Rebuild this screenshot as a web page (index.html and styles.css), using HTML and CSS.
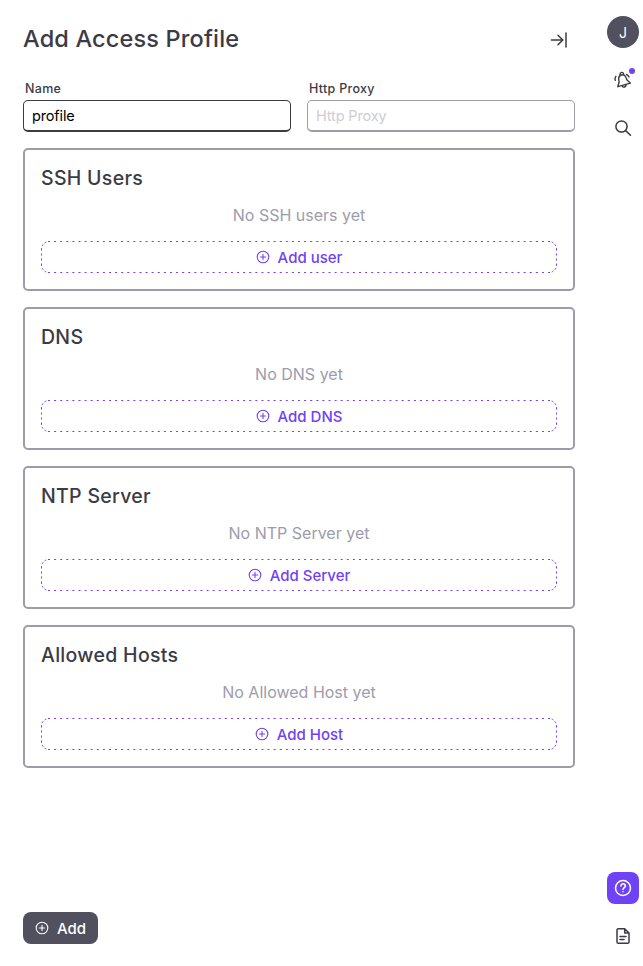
FILE: index.html
```html
<!DOCTYPE html>
<html lang="en">
<head>
<meta charset="utf-8">
<title>Add Access Profile</title>
<link rel="stylesheet" href="styles.css">
</head>
<body>
<svg class="defs" aria-hidden="true">
  <symbol id="plus" viewBox="0 0 14 14"><circle cx="7" cy="7" r="5.8"/><path d="M7 4.4v5.2M4.400 7h5.200"/></symbol>
  <symbol id="outline" viewBox="0 0 516 32">
    <path stroke-dasharray="2 4.098" d="M7 .5h502"/>
    <path stroke-dasharray="2 4.098" d="M7 31.500h502"/>
    <path stroke-dasharray="2 3" d="M.5 7.500v17M515.500 7.500v17"/>
    <path stroke-dasharray="2 2" stroke-dashoffset="1" d="M.5 8A7.500 7.500 0 0 1 8 .5M515.500 8A7.500 7.500 0 0 0 508 .5M.5 24A7.500 7.500 0 0 0 8 31.500M515.500 24A7.500 7.500 0 0 1 508 31.500"/>
  </symbol>
</svg>
<div class="app">
  <main class="panel">
    <header class="header">
      <h1>Add Access Profile</h1>
      <button class="collapse" aria-label="Collapse"><svg class="icon" viewBox="0 0 18 18"><path d="M1.500 9h11M8 4.200 12.800 9 8 13.800M16 2v14"/></svg></button>
    </header>
    <form class="form">
      <div class="fields">
        <label class="field"><span>Name</span><input class="active" type="text" value="profile"></label>
        <label class="field"><span>Http Proxy</span><input type="text" placeholder="Http Proxy"></label>
      </div>
      <section class="card">
        <h2>SSH Users</h2>
        <p>No SSH users yet</p>
        <button type="button" class="add-row"><svg class="outline"><use href="#outline"/></svg><svg class="plus"><use href="#plus"/></svg><span>Add user</span></button>
      </section>
      <section class="card">
        <h2>DNS</h2>
        <p>No DNS yet</p>
        <button type="button" class="add-row"><svg class="outline"><use href="#outline"/></svg><svg class="plus"><use href="#plus"/></svg><span>Add DNS</span></button>
      </section>
      <section class="card">
        <h2>NTP Server</h2>
        <p>No NTP Server yet</p>
        <button type="button" class="add-row"><svg class="outline"><use href="#outline"/></svg><svg class="plus"><use href="#plus"/></svg><span>Add Server</span></button>
      </section>
      <section class="card">
        <h2>Allowed Hosts</h2>
        <p>No Allowed Host yet</p>
        <button type="button" class="add-row"><svg class="outline"><use href="#outline"/></svg><svg class="plus"><use href="#plus"/></svg><span>Add Host</span></button>
      </section>
    </form>
    <footer><button class="submit"><svg class="plus"><use href="#plus"/></svg><span>Add</span></button></footer>
  </main>
  <nav class="rail">
    <div class="avatar">J</div>
    <button class="rail-btn" aria-label="Notifications"><svg class="icon bell" viewBox="0 0 18 18"><path d="M3.800 15.700 5.100 11 4.700 8.300C4.400 6 5.600 4.500 7.500 4c2-.5 3.700.4 4.400 2.300l1 2.500 3.500 3.400ZM6.100 4.200C5.800 2.700 6.400 1.700 7.500 1.400s1.900.4 2.200 1.900M8.300 15c.6 1.800 3.600 1.300 3.700-.9M1.300 9.300C.8 8 1 6.500 1.900 5.300M12.500 3.500c1.200.5 2 1.300 2.500 2.500"/></svg><i class="dot"></i></button>
    <button class="rail-btn" aria-label="Search"><svg class="icon" viewBox="0 0 18 18"><circle cx="7.500" cy="7.500" r="5.600"/><path d="m11.600 11.600 4.900 4.700"/></svg></button>
    <button class="rail-btn help" aria-label="Help"><svg class="icon" viewBox="0 0 18 18"><circle cx="9" cy="9" r="7.500"/><path d="M6.900 7c0-3 4.400-2.700 4.400 0 0 1.700-2.300 1.700-2.300 3.500M9 12.700v.1"/></svg></button>
    <button class="rail-btn" aria-label="Documents"><svg class="icon" viewBox="0 0 18 18"><path d="M3 15V3c0-.8.500-1.300 1.300-1.300h6.400L15 6v9c0 .8-.500 1.300-1.300 1.300H4.300C3.500 16.300 3 15.800 3 15ZM10.700 1.900v4.200h4.200M6 9.500h6M6 12.500h4"/></svg></button>
  </nav>
</div>
</body>
</html>
```
FILE: styles.css
```css
* { box-sizing: border-box; margin: 0; padding: 0; }
body { background: #fff; color: #3b3b45; font-family: Inter, sans-serif; }
button { font: inherit; border: 0; background: none; color: inherit; }
.defs { position: absolute; width: 0; height: 0; }
.app { display: flex; height: 966px; }
.panel { display: flex; flex-direction: column; width: 599px; padding: 23px 24px 22px 23px; }
.header { display: flex; justify-content: space-between; align-items: center; height: 32px; }
h1 { font-size: 23.5px; font-weight: 450; line-height: 32px; letter-spacing: .16px; }
.collapse { display: grid; place-items: center; width: 32px; height: 32px; margin-top: 2px; }
.icon { width: 18px; height: 18px; fill: none; stroke: currentColor; stroke-width: 1.5; stroke-linecap: round; stroke-linejoin: round; }
.bell { stroke-width: 1.4; }
.form { display: flex; flex-direction: column; gap: 16px; margin-top: 25px; }
.fields { display: grid; grid-template-columns: 268px 268px; gap: 16px; }
.field { display: flex; flex-direction: column; gap: 2px; }
.field span { font-size: 12.5px; line-height: 18px; font-weight: 500; padding-left: 2px; letter-spacing: .3px; }
.field input { height: 32px; width: 100%; padding: 0 8px; border: 1px solid #9c9cab; border-bottom-width: 2px; border-radius: 5px; font: 400 14.5px/20px Inter, sans-serif; letter-spacing: -.15px; color: #000; outline: none; }
.field .active { border-color: #3b3b45; }
.field input::placeholder { color: #cdcdd6; opacity: 1; }
.card { height: 143px; padding: 16px; border: 2px solid #9c9cab; border-radius: 5px; }
h2 { font-size: 19.5px; line-height: 24px; font-weight: 480; letter-spacing: .3px; }
.card p { margin-top: 13px; font-size: 16px; line-height: 24px; font-weight: 400; text-align: center; color: #9c9cab; }
.add-row { position: relative; display: flex; align-items: center; justify-content: center; gap: 8px; width: 100%; height: 32px; margin-top: 14px; color: #6f42f5; font-size: 15px; font-weight: 500; }
.outline { position: absolute; inset: 0; width: 516px; height: 32px; fill: none; stroke: #6f42f5; stroke-width: 1; }
.plus { width: 14px; height: 14px; margin-top: -1px; fill: none; stroke: currentColor; stroke-width: 1.1; stroke-linecap: round; }
footer { margin-top: auto; }
.submit { display: flex; align-items: center; justify-content: center; gap: 8px; width: 75px; height: 32px; border-radius: 8px; background: #50505e; color: #fff; font-size: 15px; font-weight: 500; }
.rail { display: flex; flex-direction: column; gap: 16px; width: 44px; padding: 16px 4px 14px 8px; }
.avatar { display: grid; place-items: center; width: 32px; height: 32px; border-radius: 50%; background: #50505e; color: #fff; font-size: 14px; font-weight: 400; }
.rail-btn { position: relative; display: grid; place-items: center; width: 32px; height: 32px; flex: none; }
.dot { position: absolute; top: 4px; right: 4px; width: 6px; height: 6px; border-radius: 50%; background: #6f42f5; }
.help { margin-top: auto; border-radius: 8px; background: #6f42f5; color: #fff; }
```
